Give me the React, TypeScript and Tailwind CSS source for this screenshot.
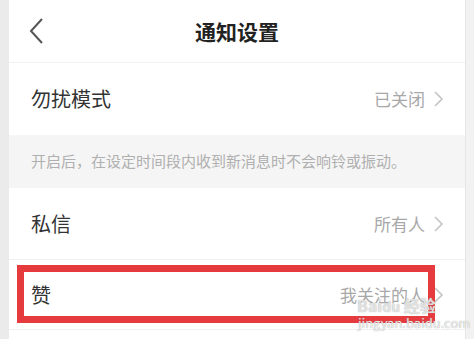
import React from "react";

const Chevron = () => (
  <svg width="11" height="18" viewBox="0 0 11 18" className="ml-[8px]">
    <path d="M2 2 L9 9 L2 16" fill="none" stroke="#c4c4c4" strokeWidth="1.6" />
  </svg>
);

const Row = ({ label, value, h, border }: { label: string; value: string; h: string; border?: boolean }) => (
  <div className={`flex items-center justify-between pl-[22px] pr-[21px] ${h} ${border ? "border-b border-[#f0f0f0]" : ""}`}>
    <span className="text-[20px] text-[#333]">{label}</span>
    <div className="flex items-center">
      <span className="text-[17px] text-[#a8a8a8]">{value}</span>
      <Chevron />
    </div>
  </div>
);

export default function App() {
  return (
    <div
      className="relative flex w-[474px] h-[339px] overflow-hidden bg-[#ececec]"
      style={{ fontFamily: '"Noto Sans CJK SC", "Noto Sans", sans-serif' }}
    >
      <div className="w-[9px] shrink-0 bg-[#ebebeb]" />
      <div className="w-[456px] shrink-0 bg-white flex flex-col">
        <div className="relative h-[63px] flex items-center justify-center border-b border-[#f2f2f2]">
          <svg width="16" height="28" viewBox="0 0 16 28" className="absolute left-[19px] top-[17px]">
            <path d="M14 2 L3 14 L14 26" fill="none" stroke="#555" strokeWidth="2" />
          </svg>
          <span className="text-[21px] font-bold text-[#222] mt-[1px]">通知设置</span>
        </div>
        <Row label="勿扰模式" value="已关闭" h="h-[72px]" />
        <div className="h-[53px] bg-[#f5f5f5] flex items-center pl-[22px]">
          <span className="text-[15px] text-[#b0b0b0]">开启后，在设定时间段内收到新消息时不会响铃或振动。</span>
        </div>
        <Row label="私信" value="所有人" h="h-[72px]" border />
        <Row label="赞" value="我关注的人" h="h-[70px]" border />
        <div className="flex-1" />
      </div>
      <div className="w-[9px] shrink-0 bg-[#f2f2f2] border-l border-[#e6e6e6]" />

      <div className="absolute left-[17px] top-[265px] w-[418px] h-[58px] border-[7px] border-[#e53b3f]" />

      <div className="absolute left-[357px] top-[297px] text-[16px] font-bold text-white/70 leading-none" style={{ textShadow: "0 0 1px #999" }}>
        Bai<span className="text-[14px]">du</span> 经验
      </div>
      <div className="absolute left-[358px] top-[316px] text-[13px] text-white/80 leading-none" style={{ textShadow: "0 0 1px #888" }}>
        jingyan.baidu.com
      </div>
    </div>
  );
}
